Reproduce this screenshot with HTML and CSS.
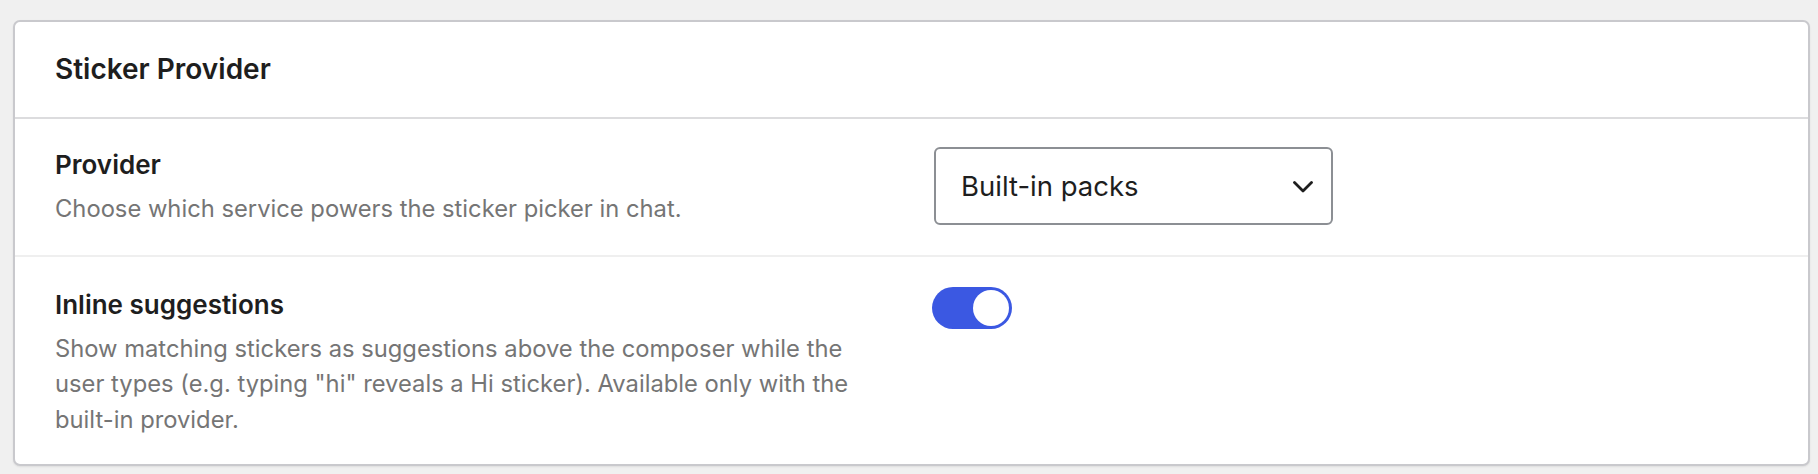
FILE: index.html
```html
<!DOCTYPE html>
<html lang="en">
<head>
<meta charset="utf-8">
<title>Sticker Provider</title>
<link rel="stylesheet" href="styles.css">
</head>
<body>
<div class="page">
  <section class="card">
    <header class="card-header">
      <h2 class="card-title">Sticker Provider</h2>
    </header>
    <div class="row">
      <div class="info">
        <div class="label">Provider</div>
        <p class="desc">Choose which service powers the sticker picker in chat.</p>
      </div>
      <div class="control">
        <div class="select">
          <span class="select-value">Built-in packs</span>
          <svg class="chevron" width="20" height="12" viewBox="0 0 20 12" aria-hidden="true"><polyline points="1.5,1.5 10,10 18.5,1.5" fill="none" stroke="#1e1e1e" stroke-width="2.8" stroke-linecap="round" stroke-linejoin="round"/></svg>
        </div>
      </div>
    </div>
    <div class="row row-last">
      <div class="info">
        <div class="label">Inline suggestions</div>
        <p class="desc">Show matching stickers as suggestions above the composer while the user types (e.g. typing "hi" reveals a Hi sticker). Available only with the built-in provider.</p>
      </div>
      <div class="control">
        <div class="toggle is-on" role="switch" aria-checked="true">
          <span class="knob"></span>
        </div>
      </div>
    </div>
  </section>
</div>
</body>
</html>
```

FILE: styles.css
```css
html, body {
  margin: 0;
  padding: 0;
  background: #f0f0f0;
}

body {
  font-family: Inter, "Noto Sans", "Liberation Sans", sans-serif;
  color: #1e1e1e;
}

.page {
  padding: 20px 8px 9px 13px;
}

.card {
  background: #ffffff;
  border: 2px solid #c9c9cd;
  border-radius: 7px;
  box-shadow: 0 1px 2px rgba(0, 0, 0, 0.08);
  overflow: hidden;
}

.card-header {
  padding: 28px 42px 28px 40px;
  border-bottom: 2px solid #dcdcde;
}

.card-title {
  margin: 0;
  font-size: 28px;
  line-height: 39px;
  font-weight: 600;
  color: #1e1e1e;
}

.row {
  display: grid;
  grid-template-columns: 1fr 1fr;
  column-gap: 43px;
  padding: 28px 42px 28px 40px;
  border-bottom: 2px solid #efefef;
}

.row-last {
  border-bottom: none;
  padding-top: 30px;
  padding-bottom: 27px;
}

.label {
  font-size: 26px;
  line-height: 36px;
  font-weight: 600;
  color: #1e1e1e;
}

.desc {
  margin: 8px 0 0;
  font-size: 23.75px;
  line-height: 35.5px;
  color: #757575;
}

.control {
  display: flex;
  align-items: flex-start;
}

.select {
  box-sizing: border-box;
  width: 399px;
  height: 78px;
  margin-left: 2px;
  border: 2px solid #8c8f94;
  border-radius: 6px;
  padding: 0 18px 0 25px;
  display: flex;
  align-items: center;
  justify-content: space-between;
  background: #ffffff;
}

.select-value {
  font-size: 27.5px;
  color: #1e1e1e;
}

.chevron {
  display: block;
  margin-top: 2px;
}

.toggle {
  box-sizing: border-box;
  width: 80px;
  height: 42px;
  border-radius: 21px;
  background: #3b58e2;
  padding: 3px;
  display: flex;
  justify-content: flex-end;
}

.knob {
  width: 36px;
  height: 36px;
  border-radius: 50%;
  background: #ffffff;
}
```
